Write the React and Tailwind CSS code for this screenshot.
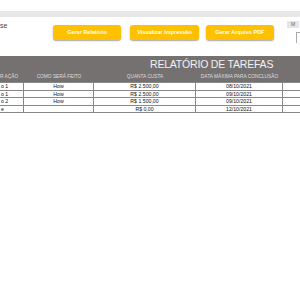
const rows = [
  { acao: "o 1", como: "How", custo: "R$ 2.500,00", data: "08/10/2021" },
  { acao: "o 1", como: "How", custo: "R$ 2.500,00", data: "09/10/2021" },
  { acao: "o 2", como: "How", custo: "R$ 1.500,00", data: "09/10/2021" },
  { acao: "e", como: "", custo: "R$ 0,00", data: "12/10/2021" },
];

const grid = "grid grid-cols-[24px_70px_102px_87px_17px]";

const Botao = ({ label, className }) => (
  <button
    className={
      "h-[15px] w-[69px] rounded-[3px] bg-[#ffc000] text-[5.5px] font-bold text-white shadow-[0_1px_1.5px_rgba(0,0,0,0.35)] " +
      className
    }
  >
    {label}
  </button>
);

export default function App() {
  return (
    <div className="w-[300px] h-[300px] overflow-hidden bg-white font-['Liberation_Sans',sans-serif]">
      <div className="h-[11px]" />
      <div className="h-[6px] bg-[#e7e7e7]" />

      {/* barra de botões */}
      <div className="relative flex h-[39px] items-start">
        <span className="absolute left-0 top-[5px] text-[7px] leading-none text-[#444]">se</span>
        <Botao label="Gerar Relatório" className="ml-[53px] mt-[8px]" />
        <Botao label="Visualizar Impressão" className="ml-[9px] mt-[8px]" />
        <Botao label="Gerar Arquivo PDF" className="ml-[7px] mt-[8px]" />
        <div className="ml-[13px] mt-[4px] flex flex-col">
          <div className="flex h-[7px] w-[12px] items-center bg-[#e6e6e6] pl-[4px] text-[5px] leading-none text-[#666]">
            M
          </div>
          <div className="ml-[9px] mt-[4px] h-[11px] w-[4px] border-l border-t border-[#aaa] bg-white" />
        </div>
      </div>

      {/* cabeçalho */}
      <div className="h-[26px] bg-[#767171]">
        <div className="h-[16px] pl-[150px] pt-[3px] text-[10.5px] leading-none tracking-[-0.2px] text-[#f2f2f2]">
          RELATÓRIO DE TAREFAS
        </div>
        <div className={grid + " h-[10px] items-center text-[4.8px] uppercase text-[#dedede]"}>
          <div className="whitespace-nowrap">R AÇÃO</div>
          <div className="text-center">Como será feito</div>
          <div className="text-center">Quanta custa</div>
          <div className="whitespace-nowrap text-center">Data máxima para conclusão</div>
          <div />
        </div>
      </div>

      {/* linhas */}
      <div className="border-t border-[#888]">
        {rows.map((r, i) => (
          <div
            key={i}
            className={grid + " h-[7.5px] border-b border-[#888] text-[5.2px] leading-[6.5px] text-[#111]"}
          >
            <div className="border-r border-[#888] pl-[1px]">{r.acao}</div>
            <div className="border-r border-[#888] text-center">{r.como}</div>
            <div className="border-r border-[#888] text-center">{r.custo}</div>
            <div className="border-r border-[#888] text-center">{r.data}</div>
            <div />
          </div>
        ))}
      </div>
    </div>
  );
}
